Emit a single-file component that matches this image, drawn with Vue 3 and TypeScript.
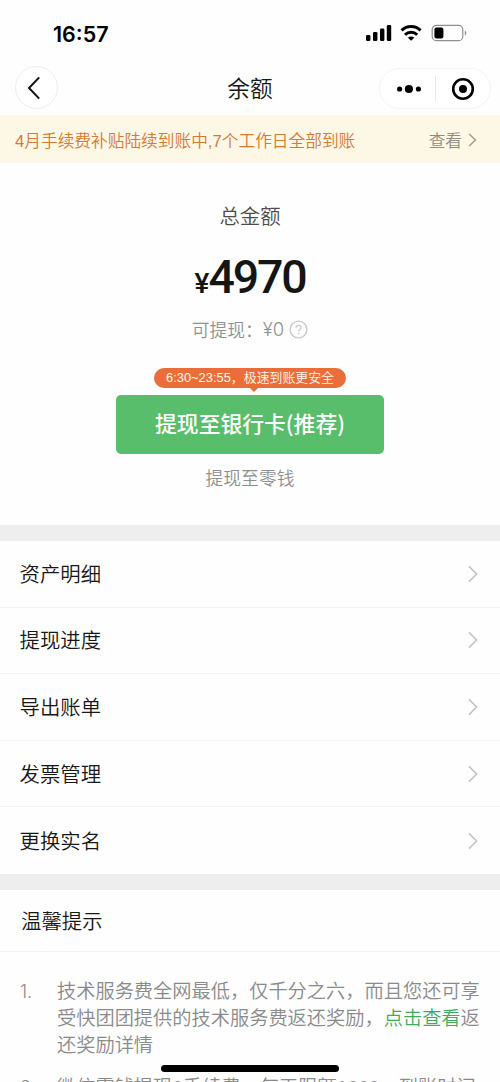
<script setup lang="ts">
interface Tip {
  lines: { text: string; link?: boolean }[][]
}

const menu: string[] = ['资产明细', '提现进度', '导出账单', '发票管理', '更换实名']

const tips: Tip[] = [
  {
    lines: [
      [{ text: '技术服务费全网最低，仅千分之六，而且您还可享' }],
      [{ text: '受快团团提供的技术服务费返还奖励，' }, { text: '点击查看', link: true }, { text: '返' }],
      [{ text: '还奖励详情' }],
    ],
  },
  {
    lines: [[{ text: '微信零钱提现0手续费，每天限额1000，到账时间' }]],
  },
]
</script>

<template>
  <div class="screen">
    <header class="status">
      <span class="time">16:57</span>
      <svg class="status-icons" width="102" height="18" viewBox="0 0 102 18">
        <rect x="0" y="11" width="4.4" height="6" rx="1.3" />
        <rect x="7" y="8" width="4.4" height="9" rx="1.3" />
        <rect x="14" y="4.5" width="4.4" height="12.5" rx="1.3" />
        <rect x="20.8" y="1" width="4.4" height="16" rx="1.3" />
        <g fill="none" stroke="#000" stroke-width="2.9">
          <path d="M35.6 6.4a13.6 13.6 0 0 1 19 0" />
          <path d="M39 10.7a8.7 8.7 0 0 1 12.2 0" />
        </g>
        <path d="M45.1 16.8l-3.2-3.1a4.6 4.6 0 0 1 6.4 0z" />
        <rect x="66.2" y="1.4" width="30.6" height="15.2" rx="4.2" fill="none" stroke="#8e8e8e" stroke-width="1.2" />
        <rect x="68.4" y="3.5" width="9" height="11" rx="2" />
        <path d="M98.8 6.6c2 .7 2 4.2 0 4.9z" fill="#8e8e8e" />
      </svg>
    </header>

    <nav class="nav">
      <button class="back" type="button">
        <svg width="14" height="24" viewBox="0 0 14 24">
          <path d="M12.2 1.4L2 12l10.2 10.6" fill="none" stroke="#111" stroke-width="2" />
        </svg>
      </button>
      <h1 class="title">余额</h1>
      <div class="capsule">
        <svg width="26" height="12" viewBox="0 0 26 12">
          <circle cx="3.6" cy="6" r="2.6" />
          <circle cx="12.9" cy="6" r="4.1" />
          <circle cx="22.4" cy="6" r="2.6" />
        </svg>
        <i class="split"></i>
        <svg width="24" height="24" viewBox="0 0 24 24">
          <circle cx="12" cy="12" r="9.8" fill="none" stroke="#000" stroke-width="2.6" />
          <circle cx="12" cy="12" r="4" />
        </svg>
      </div>
    </nav>

    <div class="notice">
      <span>4月手续费补贴陆续到账中,7个工作日全部到账</span>
      <span class="notice-more">
        查看
        <svg width="9" height="14" viewBox="0 0 9 14">
          <path d="M1.2 1l6.2 6-6.2 6" fill="none" stroke="#a5a092" stroke-width="1.6" />
        </svg>
      </span>
    </div>

    <section class="summary">
      <div class="label">总金额</div>
      <div class="amount"><span class="yen">¥</span><span class="digits">4970</span></div>
      <div class="available">
        可提现：<span class="zero">¥0</span>
        <svg width="19" height="19" viewBox="0 0 19 19" fill="none" stroke="#c9c9c9">
          <circle cx="9.5" cy="9.5" r="8.4" stroke-width="1.4" />
          <path d="M7 7.8c0-3.3 5-3.2 5-.3 0 1.9-2.5 1.9-2.5 4" stroke-width="1.3" />
          <path d="M9.5 12.9v1.4" stroke-width="1.4" />
        </svg>
      </div>
      <div class="bubble">6:30~23:55，极速到账更安全</div>
      <button class="primary" type="button"><span>提现至银行卡(推荐)</span></button>
      <a class="secondary">提现至零钱</a>
    </section>

    <ul class="menu">
      <li v-for="item in menu" :key="item">
        <span>{{ item }}</span>
        <svg width="10" height="18" viewBox="0 0 10 18">
          <path d="M1 1.4L8.6 9 1 16.6" fill="none" stroke="#c2c2c2" stroke-width="1.5" />
        </svg>
      </li>
    </ul>

    <section class="tips">
      <h2>温馨提示</h2>
      <ol>
        <li v-for="(tip, index) in tips" :key="index">
          <span class="number">{{ index + 1 }}.</span>
          <div>
            <p v-for="(line, row) in tip.lines" :key="row">
              <span v-for="part in line" :key="part.text" :class="{ link: part.link }">{{ part.text }}</span>
            </p>
          </div>
        </li>
      </ol>
    </section>

    <div class="home-indicator"></div>
  </div>
</template>

<style>
body {
  margin: 0;
  background: #fff;
}
</style>

<style scoped>
.screen {
  position: relative;
  box-sizing: border-box;
  width: 500px;
  height: 1082px;
  overflow: hidden;
  background: #fefefe;
  color: #171717;
  font-family: 'Liberation Sans', 'Noto Sans CJK SC', sans-serif;
  font-weight: 350;
  white-space: nowrap;
}

.status {
  display: flex;
  align-items: center;
  justify-content: space-between;
  height: 66px;
  padding: 0 32px 0 53px;
}

.time {
  padding-top: 1px;
  font: 600 21.5px/24px Inter, sans-serif;
  letter-spacing: 0;
  color: #000;
}

.nav {
  display: grid;
  grid-template-columns: 1fr auto 1fr;
  align-items: center;
  height: 49px;
  padding: 0 9px 0 15px;
}

.back {
  display: flex;
  align-items: center;
  justify-content: center;
  box-sizing: border-box;
  width: 43px;
  height: 43px;
  margin-top: -6px;
  padding: 0 5px 0 0;
  border: 1px solid #ededed;
  border-radius: 50%;
  background: #fff;
}

.title {
  margin: -4px 0 0 -6px;
  font-size: 22.7px;
  font-weight: 350;
  line-height: 34px;
}

.capsule {
  display: flex;
  align-items: center;
  justify-self: end;
  box-sizing: border-box;
  width: 112px;
  height: 41px;
  margin-top: -4px;
  padding: 0 15px 0 16px;
  border: 1px solid #f3f3f3;
  border-radius: 21px;
  background: #fff;
}

.split {
  width: 1px;
  height: 25px;
  margin: 0 15px 0 13px;
  background: #e8e8e8;
}

.capsule svg {
  flex: none;
}

.notice {
  display: flex;
  align-items: center;
  justify-content: space-between;
  box-sizing: border-box;
  height: 48px;
  padding: 1px 23px 0 15px;
  background: #fdf7e5;
  color: #d57a35;
  font-size: 16.7px;
}

.notice-more {
  display: flex;
  align-items: center;
  gap: 6px;
  color: #8f8c83;
}

.summary {
  display: flex;
  flex-direction: column;
  align-items: center;
  box-sizing: border-box;
  height: 378px;
  padding-top: 39px;
  border-bottom: 16px solid #eee;
}

.label {
  font-size: 20.4px;
  line-height: 30px;
  color: #4c4c4c;
}

.amount {
  display: flex;
  align-items: baseline;
  height: 56px;
  margin-top: 17px;
  line-height: 56px;
  color: #151515;
}

.yen {
  font: 500 28px/30px Roboto, sans-serif;
  letter-spacing: -1px;
}

.digits {
  font: 500 46.5px/56px Roboto, sans-serif;
  letter-spacing: -2.2px;
}

.available {
  display: flex;
  align-items: center;
  height: 28px;
  margin-top: 10px;
  font-size: 17.8px;
  color: #919191;
}

.zero {
  font: 300 18.5px/28px Inter, sans-serif;
}

.available svg {
  margin-left: 5px;
}

.bubble {
  position: relative;
  width: 192px;
  height: 20px;
  margin-top: 25px;
  border-radius: 11px;
  background: #eb6e3a;
  color: #fff6ee;
  font-size: 12.9px;
  line-height: 20px;
  text-align: center;
}

.bubble::after {
  content: '';
  position: absolute;
  top: 19px;
  left: 95px;
  border: 5px solid transparent;
  border-top: 5px solid #eb6e3a;
  border-bottom: 0;
}

.primary {
  width: 268px;
  height: 59px;
  margin-top: 7px;
  padding: 0 0 3px;
  border: 0;
  border-radius: 5px;
  background: #58be6b;
  color: #fff;
  font: 500 21.8px/32px 'Noto Sans CJK SC', sans-serif;
}

.secondary {
  margin-top: 12px;
  font-size: 17.8px;
  line-height: 27px;
  color: #8f8f8f;
}

.menu {
  margin: 0;
  padding: 0;
  border-bottom: 16px solid #eee;
  list-style: none;
}

.menu li {
  display: flex;
  align-items: center;
  justify-content: space-between;
  box-sizing: border-box;
  height: 66.6px;
  padding: 0 22px 0 19.5px;
  border-bottom: 1px solid #f3f3f3;
  font-size: 20.4px;
}

.menu li span {
  padding-bottom: 2px;
}

.menu li:last-child {
  border-bottom: 0;
}

.tips h2 {
  box-sizing: border-box;
  height: 62px;
  margin: 0;
  padding-left: 21px;
  border-bottom: 1px solid #f3f3f3;
  font-size: 20.4px;
  font-weight: 350;
  line-height: 64px;
}

.tips ol {
  margin: 0;
  padding: 26px 0 0 20px;
  color: #8a8a8a;
  font-size: 19.23px;
  line-height: 27px;
  list-style: none;
}

.tips li {
  display: flex;
  margin-bottom: 15px;
}

.number {
  width: 37px;
  font-family: Inter, sans-serif;
  font-size: 18px;
  font-weight: 300;
}

.tips p {
  height: 27px;
  margin: 0;
}

.link {
  color: #3fac5c;
}

.home-indicator {
  position: absolute;
  bottom: 10px;
  left: 161px;
  width: 178px;
  height: 7px;
  border-radius: 4px;
  background: #000;
}
</style>
